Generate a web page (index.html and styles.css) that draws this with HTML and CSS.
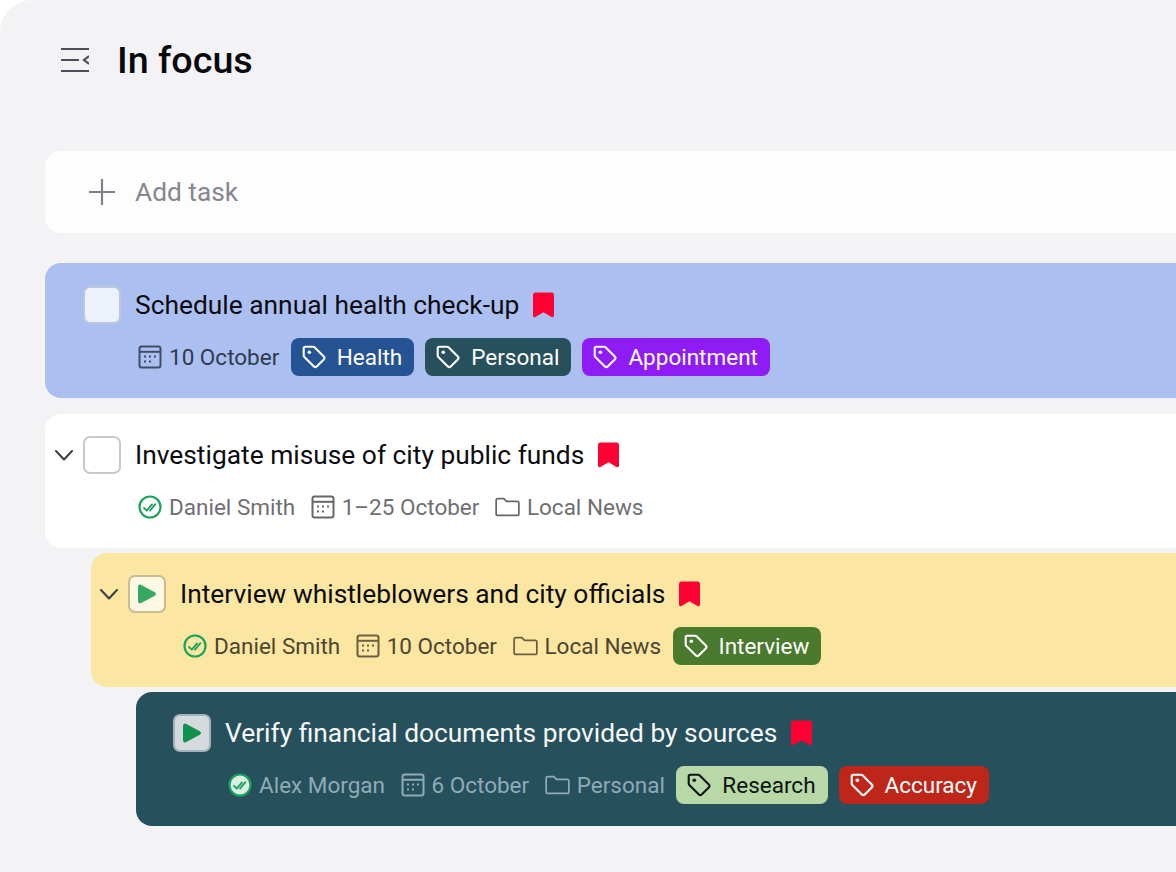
FILE: index.html
```html
<!DOCTYPE html>
<html lang="en">
<head>
<meta charset="utf-8">
<title>In focus</title>
<link rel="stylesheet" href="styles.css">
</head>
<body>
<svg class="defs" width="0" height="0" aria-hidden="true">
  <defs>
    <symbol id="i-tag" viewBox="0 0 24 24"><path d="M3.200 1.700h7.800c.6 0 1.100.2 1.500.6l9.300 9.300c.8.8.8 2 0 2.800l-7.100 7.100c-.8.8-2 .8-2.800 0L2.300 12.100c-.4-.4-.6-.9-.6-1.500V3.200c0-.9.600-1.500 1.500-1.500z" fill="none" stroke="currentColor" stroke-width="2.100" stroke-linejoin="round"/><circle cx="7.300" cy="7.300" r="1.800" fill="currentColor"/></symbol>
    <symbol id="i-cal" viewBox="0 0 24 24"><rect x="1.500" y="1.500" width="21" height="21" rx="2.200" fill="none" stroke="currentColor" stroke-width="2"/><path d="M1.500 6.800h21" fill="none" stroke="currentColor" stroke-width="2"/><g fill="currentColor"><rect x="6" y="10.500" width="2" height="2"/><rect x="11" y="10.500" width="2" height="2"/><rect x="16" y="10.500" width="2" height="2"/><rect x="6" y="15.500" width="2" height="2"/><rect x="11" y="15.500" width="2" height="2"/></g></symbol>
    <symbol id="i-folder" viewBox="0 0 26 20"><path d="M1.200 17V3c0-1 .8-1.800 1.800-1.800h6.200l2.800 3h11c1 0 1.800.8 1.800 1.800v11c0 1-.8 1.800-1.800 1.800H3c-1 0-1.800-.8-1.800-1.800z" fill="none" stroke="currentColor" stroke-width="1.800" stroke-linejoin="round"/></symbol>
    <symbol id="i-check" viewBox="0 0 24 24"><circle cx="12" cy="12" r="10.500" fill="var(--check-fill, none)" stroke="#1aa25c" stroke-width="2.200"/><path d="M6 12.800l2.800 2.800 5.200-6.200M12 15.600l5.400-6.400" fill="none" stroke="#1aa25c" stroke-width="1.800" stroke-linecap="round" stroke-linejoin="round"/></symbol>
    <symbol id="i-mark" viewBox="0 0 22 26"><path d="M2.500 0h17A2.500 2.500 0 0 1 22 2.500V24c0 1.500-1.300 2.300-2.600 1.500L11 20.500l-8.400 5C1.300 26.300 0 25.500 0 24V2.500A2.500 2.500 0 0 1 2.500 0z" fill="#ff0033"/></symbol>
    <symbol id="i-chev" viewBox="0 0 20 12"><path d="M2 2l8 8.500L18 2" fill="none" stroke="currentColor" stroke-width="2.100" stroke-linecap="round" stroke-linejoin="round"/></symbol>
    <symbol id="i-play" viewBox="0 0 20 20"><path d="M1 3c0-2 1.700-3 3.300-2l13.500 7.300c1.600 .9 1.600 2.500 0 3.400L4.300 19c-1.600 1-3.300 0-3.300-2z" fill="currentColor"/></symbol>
  </defs>
</svg>

<main class="panel">
  <header class="head">
    <svg class="menu-icon" viewBox="0 0 28 24" aria-hidden="true"><path d="M0 1h28M0 12h18M0 23h28M28 8l-5 4 5 4" fill="none" stroke="#4c4f57" stroke-width="2.200"/></svg>
    <h1 class="title">In focus</h1>
  </header>

  <section class="add">
    <svg class="plus" viewBox="0 0 26 26" aria-hidden="true"><path d="M13 0v26M0 13h26" fill="none" stroke="#7f828c" stroke-width="2.200"/></svg>
    <span class="add-text">Add task</span>
  </section>

  <div class="list">
    <article class="task blue">
      <div class="line">
        <span class="chev-slot"></span>
        <span class="box"></span>
        <span class="name">Schedule annual health check-up</span>
        <svg class="mark"><use href="#i-mark"/></svg>
      </div>
      <div class="meta">
        <span class="item"><svg class="ico"><use href="#i-cal"/></svg>10 October</span>
        <span class="pill t-health"><svg class="ico"><use href="#i-tag"/></svg>Health</span>
        <span class="pill t-personal"><svg class="ico"><use href="#i-tag"/></svg>Personal</span>
        <span class="pill t-appt"><svg class="ico"><use href="#i-tag"/></svg>Appointment</span>
      </div>
    </article>

    <article class="task white">
      <div class="line">
        <span class="chev-slot"><svg class="chev"><use href="#i-chev"/></svg></span>
        <span class="box"></span>
        <span class="name">Investigate misuse of city public funds</span>
        <svg class="mark"><use href="#i-mark"/></svg>
      </div>
      <div class="meta">
        <span class="item"><svg class="ico"><use href="#i-check"/></svg>Daniel Smith</span>
        <span class="item"><svg class="ico"><use href="#i-cal"/></svg>1–25 October</span>
        <span class="item"><svg class="ico-folder"><use href="#i-folder"/></svg>Local News</span>
      </div>
    </article>

    <article class="task yellow">
      <div class="line">
        <span class="chev-slot"><svg class="chev"><use href="#i-chev"/></svg></span>
        <span class="box play"><svg class="play-ico"><use href="#i-play"/></svg></span>
        <span class="name">Interview whistleblowers and city officials</span>
        <svg class="mark"><use href="#i-mark"/></svg>
      </div>
      <div class="meta">
        <span class="item"><svg class="ico"><use href="#i-check"/></svg>Daniel Smith</span>
        <span class="item"><svg class="ico"><use href="#i-cal"/></svg>10 October</span>
        <span class="item"><svg class="ico-folder"><use href="#i-folder"/></svg>Local News</span>
        <span class="pill t-interview"><svg class="ico"><use href="#i-tag"/></svg>Interview</span>
      </div>
    </article>

    <article class="task teal">
      <div class="line">
        <span class="chev-slot"></span>
        <span class="box play"><svg class="play-ico"><use href="#i-play"/></svg></span>
        <span class="name">Verify financial documents provided by sources</span>
        <svg class="mark"><use href="#i-mark"/></svg>
      </div>
      <div class="meta">
        <span class="item"><svg class="ico check-solid"><use href="#i-check"/></svg>Alex Morgan</span>
        <span class="item"><svg class="ico"><use href="#i-cal"/></svg>6 October</span>
        <span class="item"><svg class="ico-folder"><use href="#i-folder"/></svg>Personal</span>
        <span class="pill t-research"><svg class="ico"><use href="#i-tag"/></svg>Research</span>
        <span class="pill t-accuracy"><svg class="ico"><use href="#i-tag"/></svg>Accuracy</span>
      </div>
    </article>
  </div>
</main>
</body>
</html>
```

FILE: styles.css
```css
* { box-sizing: border-box; }

html, body {
  margin: 0;
  height: 100%;
  background: #ffffff;
  overflow: hidden;
}

body {
  font-family: Roboto, "Liberation Sans", sans-serif;
  color: #0c0c10;
}

.defs { position: absolute; }

.panel {
  height: 872px;
  background: #f3f3f5;
  border-top-left-radius: 32px;
  padding-left: 45px;
  overflow: hidden;
}

.head {
  display: flex;
  align-items: center;
  height: 121px;
  padding-left: 16px;
  padding-bottom: 2px;
}

.menu-icon {
  width: 28px;
  height: 24px;
  margin-right: 28px;
}

.title {
  margin: 0;
  font-size: 37.700px;
  font-weight: 500;
  line-height: 44px;
  color: #0a0a0e;
}

.add {
  display: flex;
  align-items: center;
  height: 82px;
  margin-top: 30px;
  padding-left: 44px;
  background: #fdfdfe;
  border-radius: 16px 0 0 16px;
}

.plus {
  width: 26px;
  height: 26px;
  margin-right: 20px;
}

.add-text {
  font-size: 26.300px;
  color: #85878f;
}

.list {
  display: flex;
  flex-direction: column;
  margin-top: 30px;
}

.task {
  height: 134px;
  padding: 22px 0 0 8px;
  border-radius: 16px 0 0 16px;
  flex: none;
}

.task.blue { height: 135px; padding-top: 23px; background: #abc0f0; --meta: #2f3b4f; --ico: #3f4c63; margin-bottom: 16px; }
.task.white { background: #ffffff; --meta: #6f6f72; --ico: #67676b; margin-bottom: 5px; }
.task.yellow { padding-left: 7px; background: #fbe6a2; --meta: #4d452f; --ico: #6b5f3f; margin-left: 46px; margin-bottom: 5px; }
.task.teal { padding-left: 7px; background: #26505c; --meta: #8fabb6; --ico: #8fabb6; margin-left: 91px; color: #f6f8f9; }

.line {
  display: flex;
  align-items: center;
  height: 38px;
}

.chev-slot {
  display: flex;
  width: 30px;
  padding-left: 1px;
  flex: none;
  color: #3c3f46;
}

.chev {
  width: 20px;
  height: 12px;
}

.box {
  display: flex;
  align-items: center;
  justify-content: center;
  width: 38px;
  height: 38px;
  flex: none;
  border: 2px solid #c9c9cd;
  border-radius: 7px;
  background: #ffffff;
}

.blue .box { background: #edf1fc; border-color: #bcc6de; }
.yellow .box { background: #fdf8e4; border-color: #c9bb95; }
.teal .box { background: #d5dadc; border-color: #a3b2b8; }

.play-ico {
  width: 20px;
  height: 20px;
  color: #35a862;
}

.teal .play-ico { color: #0f9150; }

.name {
  margin-left: 14px;
  font-size: 26.350px;
  line-height: 38px;
  white-space: nowrap;
}

.mark {
  width: 21px;
  height: 26px;
  margin-left: 14px;
  margin-bottom: 1px;
  flex: none;
}

.meta {
  display: flex;
  align-items: center;
  height: 38px;
  margin-top: 14px;
  margin-left: 85px;
  font-size: 22.500px;
  color: var(--meta);
  white-space: nowrap;
}

.item {
  display: flex;
  align-items: center;
  gap: 7px;
  margin-right: 15.500px;
}

.item:has(+ .pill) { margin-right: 11.500px; }

.ico {
  width: 24px;
  height: 24px;
  flex: none;
  color: var(--ico);
}

.ico-folder {
  width: 25px;
  height: 20px;
  flex: none;
  color: var(--ico);
}

.check-solid { --check-fill: #d9efe3; }

.pill {
  display: flex;
  align-items: center;
  gap: 11px;
  height: 38px;
  padding: 0 12px 0 11px;
  margin-right: 11px;
  border-radius: 8px;
  color: #ffffff;
}

.pill .ico { color: inherit; }

.t-health { background: #255394; }
.t-personal { background: #26505c; }
.t-appt { background: #8f1cf5; }
.t-interview { background: #4a7a2d; }
.t-research { background: #b9d8a8; color: #0c1410; }
.t-accuracy { background: #bd2618; }
```
